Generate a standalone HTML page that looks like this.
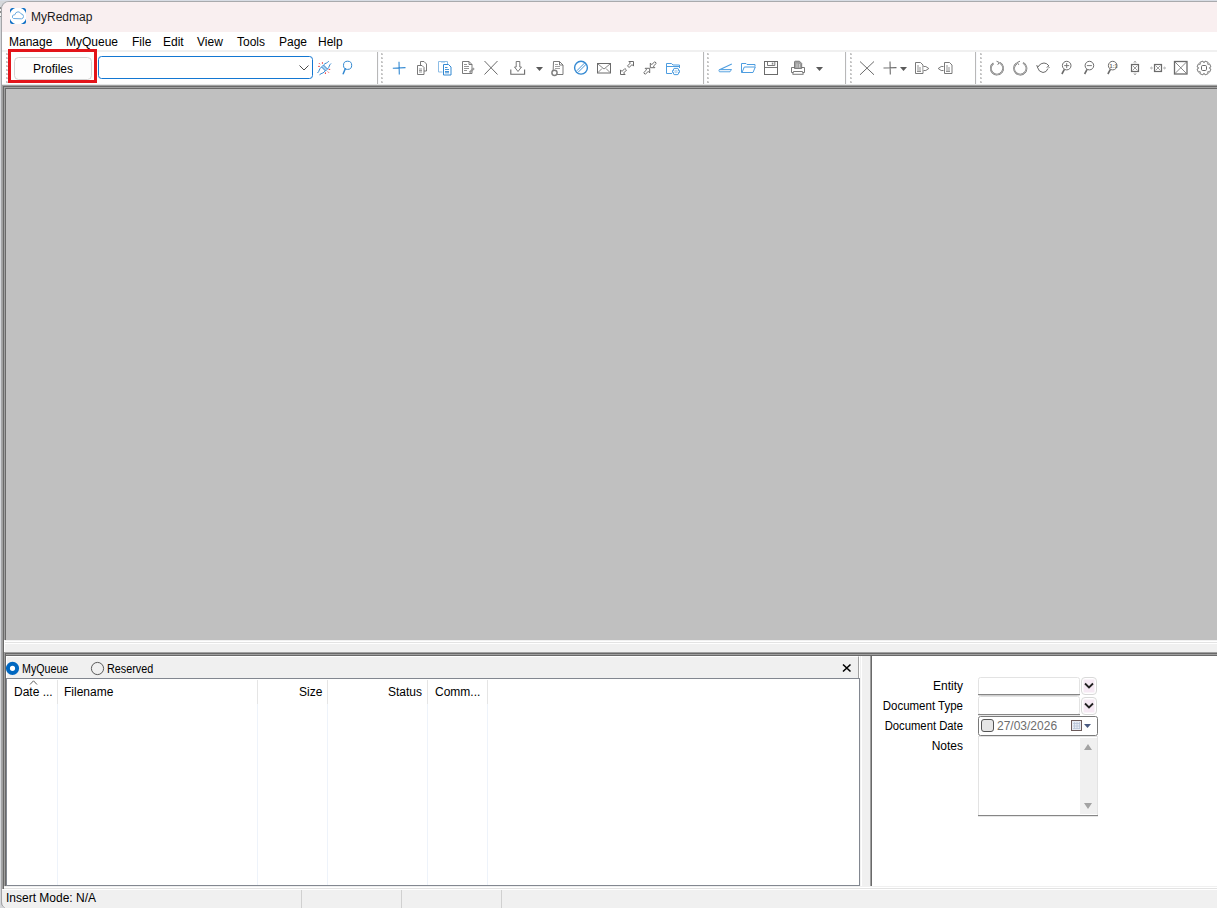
<!DOCTYPE html>
<html><head><meta charset="utf-8">
<style>
html,body{margin:0;padding:0;}
body{width:1217px;height:908px;overflow:hidden;position:relative;background:#d5d7da;font-family:"Liberation Sans",sans-serif;font-size:12px;color:#000;}
.a{position:absolute;}
.t{position:absolute;line-height:14px;white-space:nowrap;font-size:12px;}
.hl{position:absolute;height:1px;}
.vl{position:absolute;width:1px;}
</style></head><body>
<!-- outside left strip -->
<div class="a" style="left:0;top:0;width:1217px;height:1px;background:#d8dde5"></div>
<div class="a" style="left:0;top:7px;width:1px;height:10px;background:#8c8c8c"></div><div class="a" style="left:0;top:9px;width:1px;height:2px;background:#f4f4f4"></div><div class="a" style="left:0;top:13px;width:1px;height:3px;background:#f4f4f4"></div>
<!-- window -->
<div class="a" id="win" style="left:1px;top:1px;width:1230px;height:914px;border-left:1px solid #a4a5a8;border-top:1px solid #a9aaad;border-top-left-radius:8px;border-bottom-left-radius:8px;overflow:hidden;background:#f0f0f0;">
</div>
<!-- title bar -->
<div class="a" style="left:2px;top:2px;width:1215px;height:30px;background:#f9eff0;border-top-left-radius:7px;"></div>
<svg class="a" style="left:10px;top:8px" width="16" height="16">
<rect x="0" y="0" width="16" height="16" rx="2.5" fill="#0a6cc4"/>
<circle cx="8" cy="8" r="8.45" fill="#fff"/>
<path d="M3.5,10.5 Q2,10 2.5,8 Q3,6.5 4.8,6.8 Q5.5,4 8,3.8 Q10,3.8 11,5.8 Q13.5,6 13.5,8.5 Q13.5,10.5 11.5,10.8 Z" fill="none" stroke="#5aa0dc" stroke-width="0.9"/>
</svg>
<div class="t" style="left:31px;top:10px;color:#1a1a1a">MyRedmap</div>
<!-- menu bar -->
<div class="a" style="left:2px;top:32px;width:1215px;height:18px;background:#fff"></div>
<div class="t" style="left:9px;top:35px">Manage</div>
<div class="t" style="left:66px;top:35px">MyQueue</div>
<div class="t" style="left:132px;top:35px">File</div>
<div class="t" style="left:163px;top:35px">Edit</div>
<div class="t" style="left:197px;top:35px">View</div>
<div class="t" style="left:237px;top:35px">Tools</div>
<div class="t" style="left:279px;top:35px">Page</div>
<div class="t" style="left:318px;top:35px">Help</div>
<!-- toolbar -->
<div class="a" style="left:2px;top:50px;width:1215px;height:2px;background:#f0f0f0"></div>
<div class="a" style="left:2px;top:52px;width:1215px;height:32px;background:#fff"></div>
<div class="a" style="left:2px;top:84px;width:1215px;height:1px;background:#e3e5e5"></div>
<!--TB--><svg class="a" style="left:0;top:0" width="1217" height="90"><rect x="377" y="52" width="1" height="32" fill="#b8b8b8"/><rect x="378" y="52" width="1" height="32" fill="#f8f9fc"/><rect x="703" y="52" width="1" height="32" fill="#b8b8b8"/><rect x="704" y="52" width="1" height="32" fill="#f8f9fc"/><rect x="845" y="52" width="1" height="32" fill="#b8b8b8"/><rect x="846" y="52" width="1" height="32" fill="#f8f9fc"/><rect x="975" y="52" width="1" height="32" fill="#b8b8b8"/><rect x="976" y="52" width="1" height="32" fill="#f8f9fc"/><rect x="6" y="53" width="2" height="2" fill="#c4c4c4"/><rect x="7" y="53" width="1" height="1" fill="#e0e0e0"/><rect x="6" y="57" width="2" height="2" fill="#c4c4c4"/><rect x="7" y="57" width="1" height="1" fill="#e0e0e0"/><rect x="6" y="61" width="2" height="2" fill="#c4c4c4"/><rect x="7" y="61" width="1" height="1" fill="#e0e0e0"/><rect x="6" y="65" width="2" height="2" fill="#c4c4c4"/><rect x="7" y="65" width="1" height="1" fill="#e0e0e0"/><rect x="6" y="69" width="2" height="2" fill="#c4c4c4"/><rect x="7" y="69" width="1" height="1" fill="#e0e0e0"/><rect x="6" y="73" width="2" height="2" fill="#c4c4c4"/><rect x="7" y="73" width="1" height="1" fill="#e0e0e0"/><rect x="6" y="77" width="2" height="2" fill="#c4c4c4"/><rect x="7" y="77" width="1" height="1" fill="#e0e0e0"/><rect x="6" y="81" width="2" height="2" fill="#c4c4c4"/><rect x="7" y="81" width="1" height="1" fill="#e0e0e0"/><rect x="381" y="53" width="2" height="2" fill="#c4c4c4"/><rect x="382" y="53" width="1" height="1" fill="#e0e0e0"/><rect x="381" y="57" width="2" height="2" fill="#c4c4c4"/><rect x="382" y="57" width="1" height="1" fill="#e0e0e0"/><rect x="381" y="61" width="2" height="2" fill="#c4c4c4"/><rect x="382" y="61" width="1" height="1" fill="#e0e0e0"/><rect x="381" y="65" width="2" height="2" fill="#c4c4c4"/><rect x="382" y="65" width="1" height="1" fill="#e0e0e0"/><rect x="381" y="69" width="2" height="2" fill="#c4c4c4"/><rect x="382" y="69" width="1" height="1" fill="#e0e0e0"/><rect x="381" y="73" width="2" height="2" fill="#c4c4c4"/><rect x="382" y="73" width="1" height="1" fill="#e0e0e0"/><rect x="381" y="77" width="2" height="2" fill="#c4c4c4"/><rect x="382" y="77" width="1" height="1" fill="#e0e0e0"/><rect x="381" y="81" width="2" height="2" fill="#c4c4c4"/><rect x="382" y="81" width="1" height="1" fill="#e0e0e0"/><rect x="707" y="53" width="2" height="2" fill="#c4c4c4"/><rect x="708" y="53" width="1" height="1" fill="#e0e0e0"/><rect x="707" y="57" width="2" height="2" fill="#c4c4c4"/><rect x="708" y="57" width="1" height="1" fill="#e0e0e0"/><rect x="707" y="61" width="2" height="2" fill="#c4c4c4"/><rect x="708" y="61" width="1" height="1" fill="#e0e0e0"/><rect x="707" y="65" width="2" height="2" fill="#c4c4c4"/><rect x="708" y="65" width="1" height="1" fill="#e0e0e0"/><rect x="707" y="69" width="2" height="2" fill="#c4c4c4"/><rect x="708" y="69" width="1" height="1" fill="#e0e0e0"/><rect x="707" y="73" width="2" height="2" fill="#c4c4c4"/><rect x="708" y="73" width="1" height="1" fill="#e0e0e0"/><rect x="707" y="77" width="2" height="2" fill="#c4c4c4"/><rect x="708" y="77" width="1" height="1" fill="#e0e0e0"/><rect x="707" y="81" width="2" height="2" fill="#c4c4c4"/><rect x="708" y="81" width="1" height="1" fill="#e0e0e0"/><rect x="850" y="53" width="2" height="2" fill="#c4c4c4"/><rect x="851" y="53" width="1" height="1" fill="#e0e0e0"/><rect x="850" y="57" width="2" height="2" fill="#c4c4c4"/><rect x="851" y="57" width="1" height="1" fill="#e0e0e0"/><rect x="850" y="61" width="2" height="2" fill="#c4c4c4"/><rect x="851" y="61" width="1" height="1" fill="#e0e0e0"/><rect x="850" y="65" width="2" height="2" fill="#c4c4c4"/><rect x="851" y="65" width="1" height="1" fill="#e0e0e0"/><rect x="850" y="69" width="2" height="2" fill="#c4c4c4"/><rect x="851" y="69" width="1" height="1" fill="#e0e0e0"/><rect x="850" y="73" width="2" height="2" fill="#c4c4c4"/><rect x="851" y="73" width="1" height="1" fill="#e0e0e0"/><rect x="850" y="77" width="2" height="2" fill="#c4c4c4"/><rect x="851" y="77" width="1" height="1" fill="#e0e0e0"/><rect x="850" y="81" width="2" height="2" fill="#c4c4c4"/><rect x="851" y="81" width="1" height="1" fill="#e0e0e0"/><rect x="980" y="53" width="2" height="2" fill="#c4c4c4"/><rect x="981" y="53" width="1" height="1" fill="#e0e0e0"/><rect x="980" y="57" width="2" height="2" fill="#c4c4c4"/><rect x="981" y="57" width="1" height="1" fill="#e0e0e0"/><rect x="980" y="61" width="2" height="2" fill="#c4c4c4"/><rect x="981" y="61" width="1" height="1" fill="#e0e0e0"/><rect x="980" y="65" width="2" height="2" fill="#c4c4c4"/><rect x="981" y="65" width="1" height="1" fill="#e0e0e0"/><rect x="980" y="69" width="2" height="2" fill="#c4c4c4"/><rect x="981" y="69" width="1" height="1" fill="#e0e0e0"/><rect x="980" y="73" width="2" height="2" fill="#c4c4c4"/><rect x="981" y="73" width="1" height="1" fill="#e0e0e0"/><rect x="980" y="77" width="2" height="2" fill="#c4c4c4"/><rect x="981" y="77" width="1" height="1" fill="#e0e0e0"/><rect x="980" y="81" width="2" height="2" fill="#c4c4c4"/><rect x="981" y="81" width="1" height="1" fill="#e0e0e0"/><rect x="14.5" y="57.5" width="77" height="22" rx="4" fill="#fdfdfd" stroke="#d3d3d3"/><rect x="98.5" y="56.5" width="214" height="22" rx="3" fill="#fff" stroke="#1377d2"/><polyline points="299.5,65.5 304,70 308.5,65.5" fill="none" stroke="#4a4a4a" stroke-width="1"/><g fill="none" stroke="#3389d2" stroke-width="1"><path d="M317.5,73 Q319,71.5 319.3,70 Q319.8,68.5 321.5,67"/><path d="M319.5,74.8 Q321,73.5 322.8,73 Q324,72.5 325.5,70.5"/><path d="M321.5,67 L323.5,65 L327.5,69 L325.5,71 Z"/><path d="M322.5,68 L324.5,66 M323.5,69 L325.5,67 M324.5,70 L326.5,68" stroke-width="0.8"/><path d="M323.5,65 Q325,63.3 326.5,63 Q327.5,62.5 328.8,61.3"/><path d="M327.5,69 Q329,67.5 329.3,66 Q329.8,64.5 331,63.5"/></g><g fill="none" stroke="#ec3a3a" stroke-width="1"><path d="M319,63.2 l1,1"/><path d="M322.4,62.2 l0,1.6"/><path d="M318.2,66.4 l1.6,0"/><path d="M325.4,72.4 l0,1.6"/><path d="M327.8,71.6 l1,1"/><path d="M328.6,69.4 l1.6,0"/></g><circle cx="347.6" cy="65.3" r="4.1" fill="none" stroke="#3389d2" stroke-width="1"/><path d="M345.3,68.8 L343.2,73.8" stroke="#3389d2" stroke-width="1.5" stroke-linecap="round"/><path d="M392.8,68.2 L405.5,67.6 M399,61.8 L399.3,74.6" stroke="#3389d2" stroke-width="1.1" fill="none"/><g stroke="#6b6b6b" stroke-width="0.9" fill="#fff"><path d="M420.5,61.5 h3.5 l2.5,2.5 v7 h-6 z"/><path d="M417.5,65.5 h4.5 l2,2 v7 h-6.5 z"/></g><path d="M419,69 h3 M419,70.5 h3 M419,72 h3" stroke="#999" stroke-width="1"/><path d="M438.5,61.5 h9 v2.5 M438.5,61.5 v10.5 h4" fill="none" stroke="#8dbde6" stroke-width="1"/><rect x="441" y="61" width="4" height="1.5" fill="#8dbde6"/><path d="M443.5,64.5 h5 l2.5,2.5 v8 h-7.5 z" fill="#fff" stroke="#3389d2" stroke-width="1"/><path d="M445,67.5 h2.5 M445,69.5 h4 M445,71.5 h4 M445,72.8 h4" stroke="#3389d2" stroke-width="0.9"/><path d="M462.5,61.5 h6.5 l3,3 v9 h-9.5 z M469,61.5 v3 h3" fill="#fff" stroke="#6b6b6b" stroke-width="0.9"/><path d="M464,64.5 h3 M464,66.5 h5 M464,68.5 h5 M464,70.5 h3" stroke="#888" stroke-width="0.9"/><path d="M469.5,72.5 L474,68.2" stroke="#999" stroke-width="2"/><path d="M484.5,61 L497.5,74.5 M497.5,61 L484.5,74.5" stroke="#6b6b6b" stroke-width="1"/><path d="M516.2,61.5 h3.6 v5.5 h1.7 l-3.5,4.5 l-3.5,-4.5 h1.7 z" fill="#fff" stroke="#6b6b6b" stroke-width="0.9"/><path d="M510.8,69.5 v4.8 h13.8 v-4.8" fill="none" stroke="#6b6b6b" stroke-width="1.1"/><path d="M536,67 h7 l-3.5,4 z" fill="#5a5a5a"/><path d="M816,67 h7 l-3.5,4 z" fill="#5a5a5a"/><path d="M900,67 h7 l-3.5,4 z" fill="#5a5a5a"/><path d="M553.5,61.5 h6 l3.5,3.5 v9.5 h-10 z M559.5,61.5 v3.5 h3.5" fill="#fff" stroke="#6b6b6b" stroke-width="0.9"/><path d="M555,64.5 h3 M555,66.5 h5 M555,68.5 h5" stroke="#999" stroke-width="0.9"/><circle cx="554.5" cy="72.8" r="2.6" fill="#fff" stroke="#808080" stroke-width="1.5"/><circle cx="581" cy="67.7" r="6.4" fill="#fff" stroke="#3389d2" stroke-width="1.4"/><path d="M576.8,70.8 L584.8,62.8 M578.2,72.2 L586.2,64.2" stroke="#3389d2" stroke-width="0.9"/><rect x="597.5" y="63.5" width="13" height="9.5" fill="#fff" stroke="#6b6b6b" stroke-width="1"/><path d="M598,64 L604,69 L610,64 M598,72.5 L602,68.5 M610,72.5 L606,68.5" fill="none" stroke="#6b6b6b" stroke-width="0.8"/><g fill="#fff" stroke="#6b6b6b" stroke-width="1" stroke-linejoin="round"><polygon points="633.50,61.50 633.50,66.10 632.00,64.60 629.10,67.50 627.50,65.90 630.40,63.00 628.90,61.50"/><polygon points="620.50,74.50 620.50,69.90 622.00,71.40 624.90,68.50 626.50,70.10 623.60,73.00 625.10,74.50"/></g><g fill="#fff" stroke="#6b6b6b" stroke-width="1" stroke-linejoin="round"><polygon points="650.30,67.70 650.30,63.10 651.80,64.60 654.70,61.70 656.30,63.30 653.40,66.20 654.90,67.70"/><polygon points="649.70,68.30 649.70,72.90 648.20,71.40 645.30,74.30 643.70,72.70 646.60,69.80 645.10,68.30"/></g><path d="M672,73.5 h-5.5 v-10 h5 l1.5,1.5 h6.5 v3 M666.5,66.5 h12.5" fill="none" stroke="#4d9de0" stroke-width="1"/><polygon points="679.44,70.44 679.44,72.56 678.13,72.81 678.20,72.69 678.64,73.95 676.80,75.01 675.93,74.00 676.07,74.00 675.20,75.01 673.36,73.95 673.80,72.69 673.87,72.81 672.56,72.56 672.56,70.44 673.87,70.19 673.80,70.31 673.36,69.05 675.20,67.99 676.07,69.00 675.93,69.00 676.80,67.99 678.64,69.05 678.20,70.31 678.13,70.19" fill="#fff" stroke="#4d9de0" stroke-width="1"/><circle cx="676" cy="71.5" r="1" fill="none" stroke="#8dbde6" stroke-width="0.8"/><path d="M719,70 L731.8,64" stroke="#4d9de0" stroke-width="1.1"/><path d="M719.5,69.5 h12 l-1.5,2.3 h-10.5 q-1.2,-1 0,-2.3 z" fill="#e6f0f9" stroke="#4d9de0" stroke-width="0.9"/><path d="M741.5,72.5 v-9 h4.5 l1,1 h8 v2 M741.5,72.5 h11.5 l2.3,-5.5 h-11 l-2.3,5.5" fill="#fff" stroke="#4d9de0" stroke-width="1"/><rect x="764.5" y="61.5" width="13" height="13" fill="#fff" stroke="#6b6b6b" stroke-width="1"/><path d="M767.5,61.5 v4 h7.3 v-4 M765,67.5 h12" fill="none" stroke="#6b6b6b" stroke-width="0.9"/><rect x="771.8" y="62.6" width="1.5" height="2" fill="#888"/><path d="M791.5,67.5 h13 v5 h-13 z" fill="#fff" stroke="#6b6b6b" stroke-width="0.9"/><path d="M794.5,68.5 v-6.5 q0,-0.8 0.8,-0.8 h4.2 l2.2,2.2 v5.1 z" fill="#a0a0a0" stroke="#6b6b6b" stroke-width="0.8"/><path d="M797,63.5 v4 M799.5,64 v3.5" stroke="#d8d8d8" stroke-width="0.8"/><path d="M793.5,71.5 h9 l0.8,2.8 h-10.6 z" fill="#fff" stroke="#6b6b6b" stroke-width="0.9"/><path d="M860,61.5 L874,74.8 M874,61.5 L860,74.8" stroke="#6b6b6b" stroke-width="1"/><path d="M883.5,68 L896.5,67.6 M890,61.5 L890.3,74.5" stroke="#6b6b6b" stroke-width="1.1" fill="none"/><path d="M915.5,62.5 h5 l2.5,2.5 v8.5 h-7.5 z" fill="#fff" stroke="#6b6b6b" stroke-width="0.9"/><path d="M917,66 h2 M917,68 h4 M917,70 h4 M917,71.5 h4" stroke="#888" stroke-width="0.9"/><path d="M923.5,66.5 h2.3 l3,2 l-3,2 h-2.3" fill="#fff" stroke="#6b6b6b" stroke-width="0.9"/><path d="M944.5,62.5 h5 l2.5,2.5 v8.5 h-7.5 z" fill="#fff" stroke="#6b6b6b" stroke-width="0.9"/><path d="M946,66 h2 M946,68 h4 M946,70 h4 M946,71.5 h4" stroke="#888" stroke-width="0.9"/><path d="M943.5,66.5 h-2.3 l-3,2 l3,2 h2.3" fill="#fff" stroke="#6b6b6b" stroke-width="0.9"/><path d="M993.5,63.2 A6.2,6.2 0 1 0 999.8,62.8" fill="none" stroke="#6b6b6b" stroke-width="1.7"/><path d="M993.5,63.2 A6.2,6.2 0 1 0 999.8,62.8" fill="none" stroke="#fff" stroke-width="0.5"/><path d="M996.5,61.2 l2.8,1.3 l-1.6,2.3" fill="none" stroke="#6b6b6b" stroke-width="0.9"/><path d="M1023,62.8 A6.2,6.2 0 1 1 1016.8,63.2" fill="none" stroke="#6b6b6b" stroke-width="1.7"/><path d="M1023,62.8 A6.2,6.2 0 1 1 1016.8,63.2" fill="none" stroke="#fff" stroke-width="0.5"/><path d="M1020,61.2 l-2.8,1.3 l1.6,2.3" fill="none" stroke="#6b6b6b" stroke-width="0.9"/><path d="M1037,66.5 Q1039,72.5 1043,72.5 Q1046.5,72.5 1048,68.5 M1038.5,66 Q1041,63 1044,63 Q1047,63 1049,66" fill="none" stroke="#6b6b6b" stroke-width="1"/><path d="M1036.5,65 l1.5,2 l1.2,-1.5 M1049.5,68 l-1.5,-1.8 l-1.2,1.5" fill="none" stroke="#6b6b6b" stroke-width="0.9"/><circle cx="1066.7" cy="65.6" r="4.3" fill="#fff" stroke="#6b6b6b" stroke-width="1"/><path d="M1064.4,69.4 L1061.9,74" stroke="#6b6b6b" stroke-width="1.6"/><circle cx="1089.4" cy="65.6" r="4.3" fill="#fff" stroke="#6b6b6b" stroke-width="1"/><path d="M1087.1000000000001,69.4 L1084.6000000000001,74" stroke="#6b6b6b" stroke-width="1.6"/><circle cx="1112.7" cy="65.6" r="4.3" fill="#fff" stroke="#6b6b6b" stroke-width="1"/><path d="M1110.4,69.4 L1107.9,74" stroke="#6b6b6b" stroke-width="1.6"/><path d="M1064.2,65.6 h5 M1066.7,63.1 v5" stroke="#6b6b6b" stroke-width="0.9"/><path d="M1086.9,65.6 h5" stroke="#6b6b6b" stroke-width="0.9"/><text x="1109.6" y="67.6" font-size="5.5" fill="#6b6b6b" font-family="Liberation Sans" font-weight="bold">1:1</text><rect x="1131.5" y="64.5" width="7" height="7" fill="#fff" stroke="#6b6b6b" stroke-width="1.2"/><path d="M1132.5,65.5 L1137.5,70.5 M1137.5,65.5 L1132.5,70.5" stroke="#888" stroke-width="0.8"/><path d="M1135,61 v2.5 M1135,72.5 v2.5 M1133.7,62.5 l1.3,-1.5 l1.3,1.5 M1133.7,73.5 l1.3,1.5 l1.3,-1.5" fill="none" stroke="#b0b0b0" stroke-width="0.9"/><rect x="1154.5" y="64.5" width="7" height="7" fill="#fff" stroke="#6b6b6b" stroke-width="1.2"/><path d="M1155.5,65.5 L1160.5,70.5 M1160.5,65.5 L1155.5,70.5" stroke="#888" stroke-width="0.8"/><path d="M1150.5,68 h2.5 M1163,68 h2.5 M1152,66.7 l-1.5,1.3 l1.5,1.3 M1164,66.7 l1.5,1.3 l-1.5,1.3" fill="none" stroke="#b0b0b0" stroke-width="0.9"/><rect x="1174.5" y="61.5" width="12.5" height="12.5" fill="#fff" stroke="#6b6b6b" stroke-width="1.3"/><path d="M1175,62 L1186.5,73.5 M1186.5,62 L1175,73.5" stroke="#6b6b6b" stroke-width="0.8"/><polygon points="1210.92,69.06 1209.65,72.14 1207.87,71.62 1207.62,71.87 1208.14,73.65 1205.06,74.92 1204.17,73.30 1203.83,73.30 1202.94,74.92 1199.86,73.65 1200.38,71.87 1200.13,71.62 1198.35,72.14 1197.08,69.06 1198.70,68.17 1198.70,67.83 1197.08,66.94 1198.35,63.86 1200.13,64.38 1200.38,64.13 1199.86,62.35 1202.94,61.08 1203.83,62.70 1204.17,62.70 1205.06,61.08 1208.14,62.35 1207.62,64.13 1207.87,64.38 1209.65,63.86 1210.92,66.94 1209.30,67.83 1209.30,68.17" fill="#fff" stroke="#6b6b6b" stroke-width="0.9"/><rect x="1201.5" y="65.5" width="5" height="5" rx="1.2" fill="none" stroke="#6b6b6b" stroke-width="1"/><rect x="9.5" y="50.5" width="86" height="31" fill="none" stroke="#e3141a" stroke-width="3"/></svg><!--/TB-->
<div class="t" style="left:33px;top:62px">Profiles</div>

<!-- outer container sunken border -->
<div class="a" style="left:2px;top:85px;width:1215px;height:1px;background:#a0a0a0"></div>
<div class="a" style="left:2px;top:85px;width:1px;height:825px;background:#a0a0a0"></div>
<div class="a" style="left:3px;top:86px;width:1214px;height:1px;background:#696969"></div>
<div class="a" style="left:3px;top:86px;width:1px;height:803px;background:#696969"></div>
<!-- MDI client -->
<div class="a" style="left:4px;top:87px;width:1213px;height:555px;background:#c0c0c0;box-sizing:border-box;border-left:1px solid #a0a0a0;border-top:1px solid #a0a0a0;"></div>
<div class="a" style="left:5px;top:88px;width:1212px;height:552px;box-sizing:border-box;border-left:1px solid #696969;border-top:1px solid #696969;"></div>
<div class="a" style="left:4px;top:640px;width:1213px;height:1px;background:#f0f0f0"></div><div class="a" style="left:4px;top:641px;width:1213px;height:1px;background:#fff"></div>
<!-- splitter -->
<div class="a" style="left:4px;top:642px;width:1213px;height:1px;background:#e3e3e3"></div>
<div class="a" style="left:4px;top:643px;width:1213px;height:1px;background:#fff"></div>
<div class="a" style="left:4px;top:644px;width:1213px;height:8px;background:#f0f0f0"></div>
<div class="a" style="left:4px;top:640px;width:1px;height:12px;background:#fff"></div>
<!-- bottom panel borders -->
<div class="a" style="left:4px;top:652px;width:1213px;height:1px;background:#a0a0a0"></div>
<div class="a" style="left:4px;top:653px;width:1213px;height:1px;background:#696969"></div>
<div class="a" style="left:4px;top:654px;width:1213px;height:1px;background:#a0a0a0"></div>
<div class="a" style="left:4px;top:655px;width:1213px;height:1px;background:#696969"></div>
<div class="a" style="left:4px;top:652px;width:1px;height:234px;background:#a0a0a0"></div>
<div class="a" style="left:5px;top:653px;width:1px;height:233px;background:#696969"></div>

<!-- queue panel -->
<div class="a" style="left:6px;top:656px;width:853px;height:22px;background:#f0f0f0;box-sizing:border-box;border-top:1px solid #fff;border-left:1px solid #fff;border-right:1px solid #a0a0a0"></div>
<div class="a" style="left:859px;top:656px;width:1px;height:22px;background:#fff"></div>
<svg class="a" style="left:0;top:650px" width="200" height="40">
<circle cx="12.5" cy="18.3" r="4.6" fill="#fff" stroke="#0067c0" stroke-width="4"/>
<circle cx="97.5" cy="18.5" r="6.1" fill="none" stroke="#5a5a5a" stroke-width="1"/>
</svg>
<div class="t" style="left:22px;top:662px;transform:scaleX(0.89);transform-origin:left">MyQueue</div>
<div class="t" style="left:107px;top:662px;transform:scaleX(0.90);transform-origin:left">Reserved</div>
<svg class="a" style="left:838px;top:660px" width="18" height="16"><path d="M5,4.5 L12.5,11.5 M12.5,4.5 L5,11.5" stroke="#000" stroke-width="1.6"/></svg>

<div class="a" style="left:6px;top:678px;width:854px;height:208px;background:#fff;box-sizing:border-box;border:1px solid #828790"></div>
<div class="a" style="left:57px;top:680px;width:1px;height:24px;background:#e5e5e5"></div>
<div class="a" style="left:57px;top:704px;width:1px;height:181px;background:#eef3fa"></div>
<div class="a" style="left:257px;top:680px;width:1px;height:24px;background:#e5e5e5"></div>
<div class="a" style="left:257px;top:704px;width:1px;height:181px;background:#eef3fa"></div>
<div class="a" style="left:327px;top:680px;width:1px;height:24px;background:#e5e5e5"></div>
<div class="a" style="left:327px;top:704px;width:1px;height:181px;background:#eef3fa"></div>
<div class="a" style="left:427px;top:680px;width:1px;height:24px;background:#e5e5e5"></div>
<div class="a" style="left:427px;top:704px;width:1px;height:181px;background:#eef3fa"></div>
<div class="a" style="left:487px;top:680px;width:1px;height:24px;background:#e5e5e5"></div>
<div class="a" style="left:487px;top:704px;width:1px;height:181px;background:#eef3fa"></div>
<svg class="a" style="left:0;top:650px" width="60" height="40"><polyline points="30,34.5 33.5,30.8 37,34.5" fill="none" stroke="#606060" stroke-width="1"/></svg>
<div class="t" style="left:14px;top:685px">Date ...</div>
<div class="t" style="left:64px;top:685px">Filename</div>
<div class="t" style="left:299px;top:685px">Size</div>
<div class="t" style="left:388px;top:685px">Status</div>
<div class="t" style="left:435px;top:685px">Comm...</div>


<!-- vertical splitter -->
<div class="a" style="left:860px;top:656px;width:1px;height:230px;background:#f0f0f0"></div>
<div class="a" style="left:861px;top:656px;width:1px;height:230px;background:#fff"></div>
<div class="a" style="left:862px;top:656px;width:8px;height:230px;background:#f0f0f0"></div>
<div class="a" style="left:870px;top:656px;width:1px;height:230px;background:#a0a0a0"></div>
<div class="a" style="left:871px;top:656px;width:1px;height:230px;background:#696969"></div>
<!-- right panel -->
<div class="a" style="left:872px;top:656px;width:345px;height:230px;background:#fff"></div>
<div class="t" style="left:872px;width:91px;text-align:right;top:679px">Entity</div>
<div class="t" style="left:872px;width:91px;text-align:right;top:699px;transform:scaleX(0.958);transform-origin:right">Document Type</div>
<div class="t" style="left:872px;width:91px;text-align:right;top:719px;transform:scaleX(0.94);transform-origin:right">Document Date</div>
<div class="t" style="left:872px;width:91px;text-align:right;top:739px">Notes</div>
<svg class="a" style="left:970px;top:670px" width="140" height="150">
<rect x="8.5" y="7.5" width="101" height="18" rx="2" fill="#fff" stroke="#e3e3e3"/>
<rect x="8" y="24" width="102" height="1.2" fill="#868686"/>
<rect x="111.5" y="7.5" width="15" height="17" rx="3.5" fill="#fff" stroke="#d9d9d9"/><rect x="113.5" y="9.5" width="11" height="13" fill="#f6e9f4"/>
<polyline points="115,13.5 119,17.5 123,13.5" fill="none" stroke="#222" stroke-width="1.8"/>
<rect x="8.5" y="26.5" width="101" height="18" rx="2" fill="#fff" stroke="#e3e3e3"/>
<rect x="8" y="44" width="102" height="1.2" fill="#868686"/>
<rect x="111.5" y="27.5" width="15" height="17" rx="3.5" fill="#fff" stroke="#d9d9d9"/><rect x="113.5" y="29.5" width="11" height="13" fill="#f6e9f4"/>
<polyline points="115,33.5 119,37.5 123,33.5" fill="none" stroke="#222" stroke-width="1.8"/>
<rect x="8.5" y="46.5" width="119" height="19" rx="2" fill="#fff" stroke="#7a7a7a"/>
<rect x="11.5" y="49.5" width="12" height="12" rx="2.5" fill="#e6e6e6" stroke="#555" stroke-width="1"/>
<rect x="101.5" y="50.5" width="10" height="10" fill="#e8ecf4" stroke="#6b5b5b"/>
<path d="M103,53.5 h7 M103,56 h7 M103,58.5 h7 M104.5,52 v7 M107,52 v7 M109.5,52 v7" stroke="#b8c4d8" stroke-width="0.8"/>
<path d="M114,54 h7 l-3.5,4 z" fill="#4a5a80"/>
<rect x="8.5" y="66.5" width="119" height="79" fill="#fff" stroke="#e3e3e3"/>
<rect x="8" y="145" width="120" height="1.2" fill="#868686"/>
<rect x="110" y="68" width="17" height="76" fill="#f0f0f0"/>
<path d="M114,80 h8 l-4,-6 z M114,133 h8 l-4,6 z" fill="#a3a3a3"/>
</svg>
<div class="t" style="left:997px;top:719px;color:#6d6d6d">27/03/2026</div>


<!-- bottom edges -->
<div class="a" style="left:4px;top:886px;width:1213px;height:1px;background:#f0f0f0"></div><div class="a" style="left:4px;top:887px;width:1213px;height:1px;background:#fff"></div>
<div class="a" style="left:4px;top:888px;width:1213px;height:1px;background:#e3e3e3"></div>
<div class="a" style="left:2px;top:889px;width:1215px;height:1px;background:#fff"></div>
<!-- status bar -->
<div class="a" style="left:2px;top:890px;width:1215px;height:20px;background:#f0f0f0"></div>
<div class="t" style="left:6px;top:891px">Insert Mode: N/A</div>
<div class="a" style="left:301px;top:890px;width:1px;height:18px;background:#d0d0d0"></div>
<div class="a" style="left:401px;top:890px;width:1px;height:18px;background:#d0d0d0"></div>
<div class="a" style="left:501px;top:890px;width:1px;height:18px;background:#d0d0d0"></div>
<svg class="a" style="left:0;top:890px" width="14" height="18">
<path d="M0,0 L1,0 L1,12 A8,8 0 0 0 9,20 L0,20 Z" fill="#d5d7da"/>
<path d="M1.5,0 V12 A7.5,7.5 0 0 0 9,19.5" fill="none" stroke="#a4a5a8" stroke-width="1"/>
</svg>
</body></html>
